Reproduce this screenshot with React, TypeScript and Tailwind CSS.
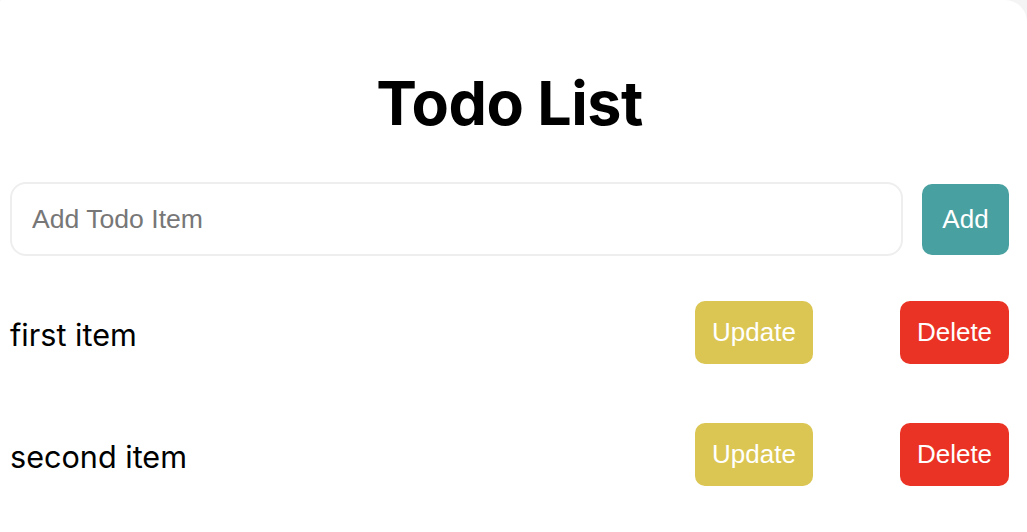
import React, { useState } from 'react';

const todos = ['first item', 'second item'];

export default function App() {
  const [text, setText] = useState('');

  return (
    <div className="min-h-[532px] w-full bg-[#f4f4f4]">
      <div className="min-h-[532px] bg-white rounded-tr-[22px] rounded-tl-[2px] pl-[10px] pr-[18px] pt-[71px]">
        <h1 className="text-center text-[61px] leading-[64px] font-bold text-black font-['Inter',sans-serif] tracking-[-0.5px]">
          Todo List
        </h1>

        <div className="flex items-center gap-[19px] mt-[47px]">
          <input
            value={text}
            onChange={e => setText(e.target.value)}
            placeholder="Add Todo Item"
            className="flex-1 h-[74px] border-2 border-[#eeeeee] rounded-[16px] px-[20px] text-[26.6px] font-['Liberation_Sans',Arial,sans-serif] placeholder:text-[#777777] outline-none"
          />
          <button className="w-[87px] h-[71px] rounded-[10px] bg-[#49a0a0] text-white text-[26px] font-['Liberation_Sans',Arial,sans-serif]">
            Add
          </button>
        </div>

        <ul className="mt-[45px] flex flex-col gap-[59px]">
          {todos.map(item => (
            <li key={item} className="flex items-center">
              <span className="flex-1 pt-[4px] text-[30.6px] text-black font-['Inter',sans-serif]">{item}</span>
              <button className="w-[118px] h-[63px] rounded-[10px] bg-[#dbc653] text-white text-[26px] font-['Liberation_Sans',Arial,sans-serif]">
                Update
              </button>
              <button className="ml-[87px] w-[109px] h-[63px] rounded-[10px] bg-[#ea3324] text-white text-[26px] font-['Liberation_Sans',Arial,sans-serif]">
                Delete
              </button>
            </li>
          ))}
        </ul>
      </div>
    </div>
  );
}
